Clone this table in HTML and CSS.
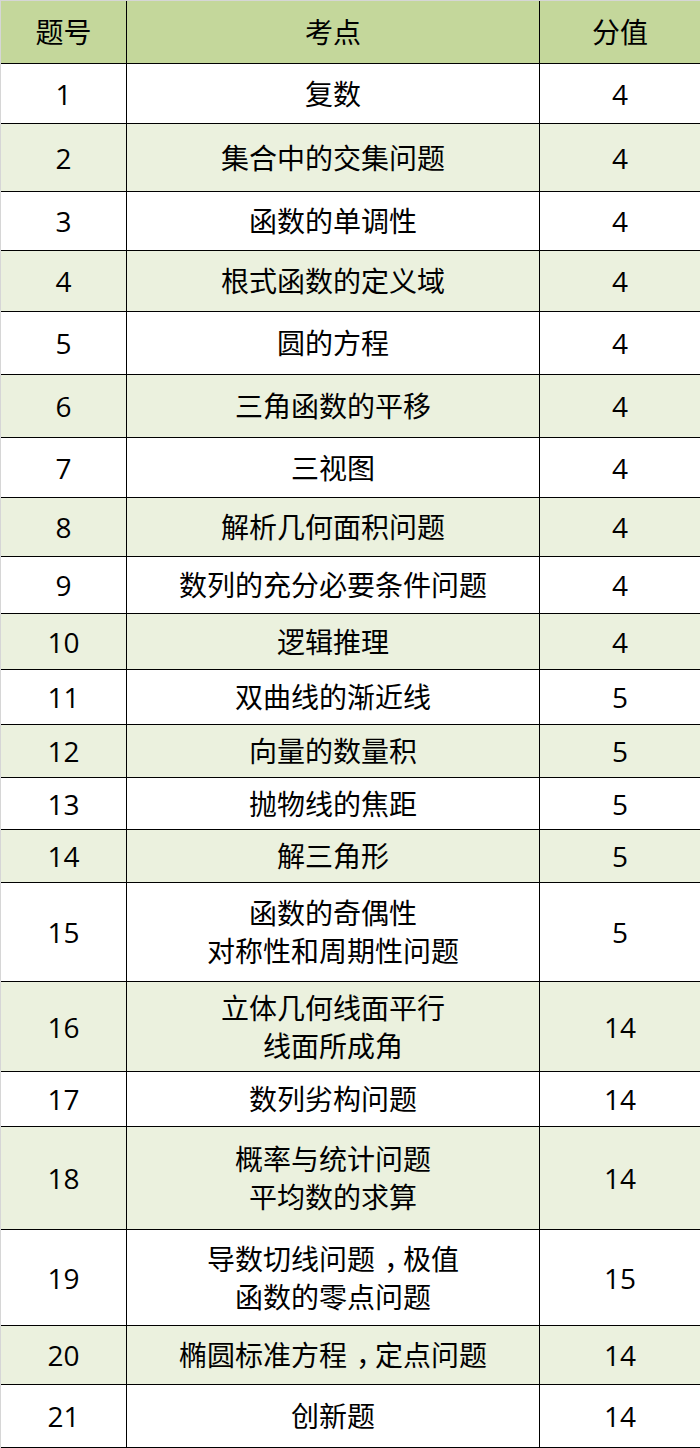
FILE: index.html
```html
<!DOCTYPE html>
<html lang="zh-CN">
<head>
<meta charset="utf-8">
<title>考点分值表</title>
<link rel="stylesheet" href="styles.css">
</head>
<body>
<div class="sheet">
  <div class="row head h63"><div class="c">题号</div><div class="c">考点</div><div class="c">分值</div></div>
  <div class="row h60"><div class="c">1</div><div class="c">复数</div><div class="c">4</div></div>
  <div class="row alt h68"><div class="c">2</div><div class="c">集合中的交集问题</div><div class="c">4</div></div>
  <div class="row h59"><div class="c">3</div><div class="c">函数的单调性</div><div class="c">4</div></div>
  <div class="row alt h61"><div class="c">4</div><div class="c">根式函数的定义域</div><div class="c">4</div></div>
  <div class="row h63"><div class="c">5</div><div class="c">圆的方程</div><div class="c">4</div></div>
  <div class="row alt h63"><div class="c">6</div><div class="c">三角函数的平移</div><div class="c">4</div></div>
  <div class="row h60"><div class="c">7</div><div class="c">三视图</div><div class="c">4</div></div>
  <div class="row alt h59"><div class="c">8</div><div class="c">解析几何面积问题</div><div class="c">4</div></div>
  <div class="row h57"><div class="c">9</div><div class="c">数列的充分必要条件问题</div><div class="c">4</div></div>
  <div class="row alt h56"><div class="c">10</div><div class="c">逻辑推理</div><div class="c">4</div></div>
  <div class="row h55"><div class="c">11</div><div class="c">双曲线的渐近线</div><div class="c">5</div></div>
  <div class="row alt h53"><div class="c">12</div><div class="c">向量的数量积</div><div class="c">5</div></div>
  <div class="row h52"><div class="c">13</div><div class="c">抛物线的焦距</div><div class="c">5</div></div>
  <div class="row alt h53"><div class="c">14</div><div class="c">解三角形</div><div class="c">5</div></div>
  <div class="row h99"><div class="c">15</div><div class="c"><span>函数的奇偶性<br>对称性和周期性问题</span></div><div class="c">5</div></div>
  <div class="row alt h90"><div class="c">16</div><div class="c"><span>立体几何线面平行<br>线面所成角</span></div><div class="c">14</div></div>
  <div class="row h55"><div class="c">17</div><div class="c">数列劣构问题</div><div class="c">14</div></div>
  <div class="row alt h103"><div class="c">18</div><div class="c"><span>概率与统计问题<br>平均数的求算</span></div><div class="c">14</div></div>
  <div class="row h96"><div class="c">19</div><div class="c"><span>导数切线问题<span class="punct">，</span>极值<br>函数的零点问题</span></div><div class="c">15</div></div>
  <div class="row alt h59"><div class="c">20</div><div class="c"><span>椭圆标准方程<span class="punct">，</span>定点问题</span></div><div class="c">14</div></div>
  <div class="row h63"><div class="c">21</div><div class="c">创新题</div><div class="c">14</div></div>
</div>
</body>
</html>
```

FILE: styles.css
```css
html, body {
  margin: 0;
  padding: 0;
  background: #ffffff;
}

.sheet {
  width: 700px;
  box-sizing: border-box;
  border-top: 1px solid #d6d6d6;
  border-left: 1px solid #d6d6d6;
  font-family: "Open Sans", "Noto Sans CJK SC", sans-serif;
  font-size: 28px;
  line-height: 38px;
  color: #000000;
}

.row {
  display: grid;
  grid-template-columns: 126px 413px 1fr;
  box-sizing: border-box;
  border-bottom: 1px solid #000000;
  background: #ffffff;
}

.row.alt {
  background: #ebf1de;
}

.row.head {
  background: #c4d79b;
}

.c {
  display: flex;
  align-items: center;
  justify-content: center;
  text-align: center;
  box-sizing: border-box;
  border-right: 1px solid #000000;
}

.c:last-child {
  border-right: none;
}

/* half-width comma glyph, padded back to a full em and centred */
.punct {
  font-feature-settings: "halt" 1;
  padding-left: 0.32em;
  padding-right: 0.18em;
}

.h52 { height: 52px; }
.h53 { height: 53px; }
.h55 { height: 55px; }
.h56 { height: 56px; }
.h57 { height: 57px; }
.h59 { height: 59px; }
.h60 { height: 60px; }
.h61 { height: 61px; }
.h63 { height: 63px; }
.h68 { height: 68px; }
.h90 { height: 90px; }
.h96 { height: 96px; }
.h99 { height: 99px; }
.h103 { height: 103px; }
```
